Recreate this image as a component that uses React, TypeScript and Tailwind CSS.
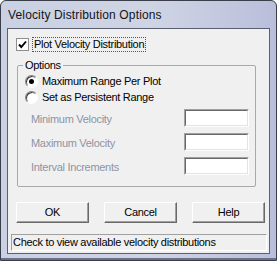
import React from 'react';

const font = { fontFamily: '"Liberation Sans", Arial, sans-serif' };

function Sunken({ className = '' }: { className?: string }) {
  return (
    <div className={`border-t border-l border-t-[#a0a0a0] border-l-[#a0a0a0] border-b border-r border-b-white border-r-white ${className}`}>
      <div className="h-full w-full border-t border-l border-t-[#696969] border-l-[#696969] border-b border-r border-b-[#e3e3e3] border-r-[#e3e3e3] bg-white" />
    </div>
  );
}

function Radio({ checked }: { checked?: boolean }) {
  return (
    <div className="relative h-[13px] w-[13px] rounded-full border border-t-[#808080] border-l-[#808080] border-b-white border-r-white bg-white shadow-[inset_1px_1px_0_#404040]">
      {checked && <div className="absolute left-[3px] top-[3px] h-[5px] w-[5px] rounded-full bg-black" />}
    </div>
  );
}

function Btn({ label }: { label: string }) {
  return (
    <div className="flex h-[21px] w-[73px] items-center justify-center border border-t-white border-l-white border-b-[#696969] border-r-[#696969] bg-[#f0f0f0] text-black shadow-[inset_-1px_-1px_0_#a0a0a0]">
      {label}
    </div>
  );
}

export default function App() {
  return (
    <div
      className="h-[261px] w-[277px] overflow-hidden rounded-t-[6px] border border-[#3a3d4a] bg-[linear-gradient(90deg,#c9d1e3_0%,#cfd4e4_55%,#b9bfdb_100%)] text-[11px] tracking-[-0.3px] text-black shadow-[inset_0_-2px_0_#6a7086]"
      style={font}
    >
      <div className="flex h-[27px] items-center pl-[7px] pt-[1px] text-[12px] tracking-[0.15px] text-[#141414]">
        Velocity Distribution Options
      </div>
      <div className="mx-[6px] h-[226px] border border-[#5a6070] bg-[#f0f0f0]">
        <div className="flex flex-col pt-[8px]">
          <div className="flex items-center pl-[8px]">
            <div className="relative h-[13px] w-[13px] border border-[#8e8f8f] bg-white">
              <svg viewBox="0 0 11 11" className="absolute left-0 top-0 h-[11px] w-[11px]">
                <path d="M2 5.5 L4.3 8 L9 2.5" fill="none" stroke="#000" strokeWidth="1.9" />
              </svg>
            </div>
            <span className="ml-[3px] border border-dotted border-[#555] px-[1px] leading-[13px]">
              Plot Velocity Distribution
            </span>
          </div>

          <div className="relative ml-[9px] mt-[13px] h-[122px] w-[239px] rounded-[2px] border border-[#a9a9a9]">
            <span className="absolute -top-[8px] left-[5px] bg-[#f0f0f0] px-[2px] leading-[14px]">Options</span>
            <div className="flex flex-col gap-[3px] pl-[7px] pt-[9px]">
              <div className="flex items-center gap-[4px] leading-[13px]">
                <Radio checked />
                <span>Maximum Range Per Plot</span>
              </div>
              <div className="flex items-center gap-[4px] leading-[13px]">
                <Radio />
                <span>Set as Persistent Range</span>
              </div>
            </div>
            <div className="mt-[5px] flex flex-col gap-[6px] pl-[13px] text-[#8d94a3]">
              {['Minimum Velocity', 'Maximum Velocity', 'Interval Increments'].map((l) => (
                <div key={l} className="flex h-[18px] items-center justify-between pr-[6px]">
                  <span className="pt-[3px]">{l}</span>
                  <Sunken className="h-[18px] w-[65px]" />
                </div>
              ))}
            </div>
          </div>

          <div className="mt-[15px] flex gap-[15px] pl-[8px]">
            <Btn label="OK" />
            <Btn label="Cancel" />
            <Btn label="Help" />
          </div>

          <div className="ml-[3px] mt-[11px] flex h-[17px] w-[256px] items-center border border-t-[#a0a0a0] border-l-[#a0a0a0] border-b-white border-r-white pl-[1px]">
            Check to view available velocity distributions
          </div>
        </div>
      </div>
    </div>
  );
}
